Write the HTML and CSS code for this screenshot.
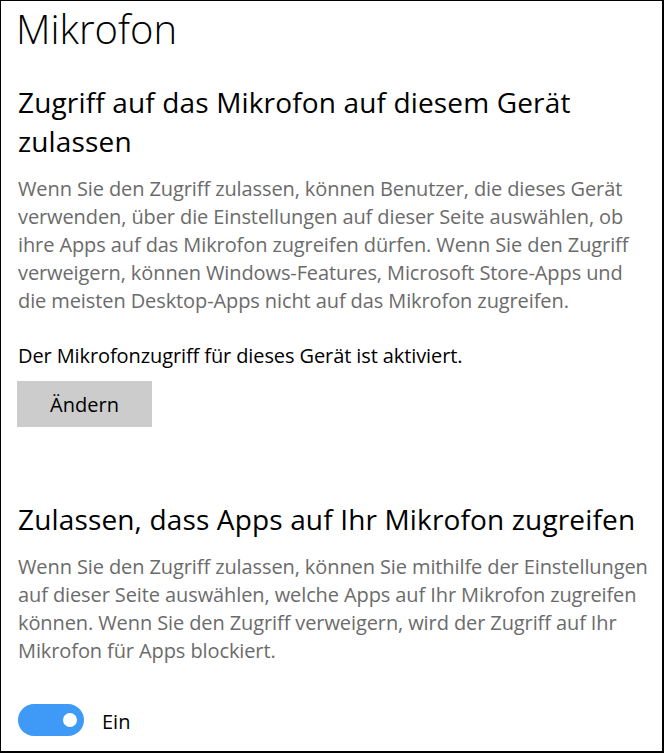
FILE: index.html
```html
<!DOCTYPE html>
<html lang="de">
<head>
<meta charset="utf-8">
<title>Mikrofon</title>
<link rel="stylesheet" href="styles.css">
</head>
<body>
<div class="frame">
  <h1 class="title">Mikrofon</h1>
  <section class="section first">
    <h2 class="heading">Zugriff auf das Mikrofon auf diesem Gerät zulassen</h2>
    <p class="desc">Wenn Sie den Zugriff zulassen, können Benutzer, die dieses Gerät verwenden, über die Einstellungen auf dieser Seite auswählen, ob ihre Apps auf das Mikrofon zugreifen dürfen. Wenn Sie den Zugriff verweigern, können Windows-Features, Microsoft Store-Apps und die meisten Desktop-Apps nicht auf das Mikrofon zugreifen.</p>
    <p class="status">Der Mikrofonzugriff für dieses Gerät ist aktiviert.</p>
    <button class="btn" type="button">Ändern</button>
  </section>
  <section class="section second">
    <h2 class="heading">Zulassen, dass Apps auf Ihr Mikrofon zugreifen</h2>
    <p class="desc">Wenn Sie den Zugriff zulassen, können Sie mithilfe der Einstellungen auf dieser Seite auswählen, welche Apps auf Ihr Mikrofon zugreifen können. Wenn Sie den Zugriff verweigern, wird der Zugriff auf Ihr Mikrofon für Apps blockiert.</p>
    <div class="toggle-row">
      <span class="toggle"><span class="knob"></span></span>
      <span class="toggle-label">Ein</span>
    </div>
  </section>
</div>
</body>
</html>
```
FILE: styles.css
```css
html, body {
  margin: 0;
  padding: 0;
  background: #fff;
}
.frame {
  box-sizing: border-box;
  width: 664px;
  height: 753px;
  border-left: 1px solid #000;
  border-top: 1px solid #000;
  border-right: 2px solid #000;
  border-bottom: 2px solid #000;
  padding: 0 10px 0 17px;
  overflow: hidden;
  font-family: "Open Sans", "Noto Sans", sans-serif;
  color: #000;
}
.title {
  margin: 0 0 0 -2px;
  font-size: 40px;
  font-weight: 300;
  line-height: 56px;
  height: 56px;
}
.heading {
  margin: 0;
  font-size: 28px;
  font-weight: 400;
  line-height: 39px;
  letter-spacing: 0.15px;
}
.section.first {
  margin-top: 26px;
}
.section.second {
  margin-top: 73px;
}
.desc {
  margin: 14px 0 0;
  font-size: 20px;
  line-height: 28px;
  color: #6b6b6b;
  font-weight: 400;
  letter-spacing: -0.1px;
}
.status {
  margin: 27px 0 0;
  font-size: 20px;
  line-height: 28px;
  letter-spacing: -0.1px;
}
.btn {
  display: block;
  margin: 11px 0 0 -1px;
  width: 135px;
  height: 46px;
  border: 0;
  background: #ccc;
  font-family: inherit;
  font-size: 20px;
  color: #000;
  padding: 0;
}
.toggle-row {
  display: flex;
  align-items: center;
  gap: 18px;
  margin-top: 39px;
}
.toggle {
  width: 66px;
  height: 32px;
  border-radius: 16px;
  background: #3f9af7;
  display: flex;
  align-items: center;
  justify-content: flex-end;
  padding-right: 7px;
  box-sizing: border-box;
}
.knob {
  width: 14px;
  height: 14px;
  border-radius: 50%;
  background: #fff;
}
.toggle-label {
  font-size: 20px;
  line-height: 28px;
  padding-top: 3px;
}
```
